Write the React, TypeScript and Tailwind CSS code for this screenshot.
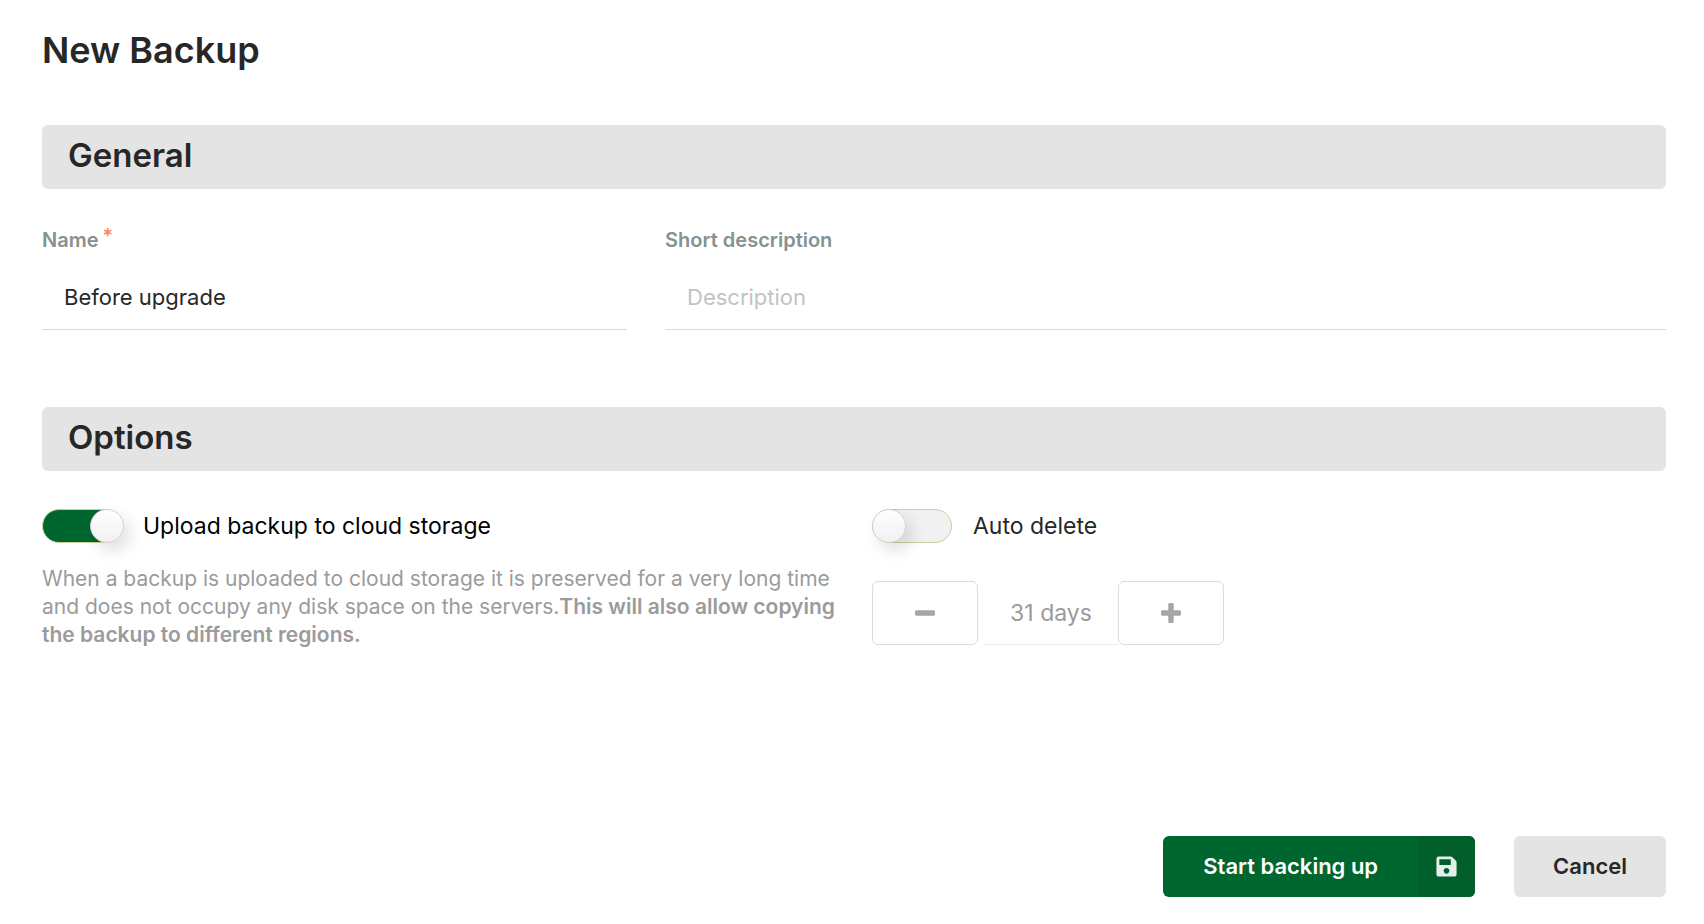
import { useState } from "react";
import type { InputHTMLAttributes, ReactNode } from "react";
import { FaSave } from "react-icons/fa";

function SectionHeading({ children }: { children: ReactNode }) {
  return (
    <h2 className="flex h-16 items-center rounded-md bg-[#e4e4e4] px-[26px] pb-0.5 text-[33px] font-semibold">
      {children}
    </h2>
  );
}

function Field({
  id,
  label,
  required,
  ...input
}: { id: string; label: string } & InputHTMLAttributes<HTMLInputElement>) {
  return (
    <div className="flex min-w-0 flex-col">
      <label htmlFor={id} className="flex gap-1 text-[20px] leading-6 font-semibold text-[#849290]">
        {label}
        {required && <span className="-mt-1 font-medium text-[#ff7f50]">*</span>}
      </label>
      <input
        id={id}
        className="mt-4 h-[62px] w-full border-b border-[#d9dbdb] bg-transparent px-[22px] pb-1 text-[22px] outline-none placeholder:text-[#bfc4c3]"
        {...input}
      />
    </div>
  );
}

function Toggle({
  id,
  label,
  checked,
  onChange,
}: {
  id: string;
  label: string;
  checked: boolean;
  onChange: (value: boolean) => void;
}) {
  return (
    <div className="flex h-[34px] items-center gap-[21px]">
      <input
        id={id}
        type="checkbox"
        role="switch"
        checked={checked}
        onChange={(e) => onChange(e.target.checked)}
        className="flex h-[34px] w-20 shrink-0 appearance-none items-center rounded-full border border-[#c9cf9c] bg-[#f1f1f1] before:-ml-px before:size-[34px] before:shrink-0 before:rounded-full before:border before:border-[#d2d2d2] before:bg-linear-to-b before:from-white before:to-[#f1f1f1] before:shadow-[6px_8px_16px_rgba(0,0,0,0.12)] checked:bg-[#006630] checked:before:ml-[47px]"
      />
      <label htmlFor={id} className={checked ? "text-[23px] text-black" : "text-[23px]"}>
        {label}
      </label>
    </div>
  );
}

function StepButton({ label, d, onClick }: { label: string; d: string; onClick: () => void }) {
  return (
    <button
      type="button"
      aria-label={label}
      onClick={onClick}
      className="flex h-16 w-[106px] items-center justify-center rounded-md border border-[#dcdcdc] text-[#a6a6a6]"
    >
      <svg viewBox="0 0 1408 1408" className="size-5" fill="currentColor" aria-hidden="true">
        <path d={d} />
      </svg>
    </button>
  );
}

const minusPath = "M96 512H1312Q1408 512 1408 608V800Q1408 896 1312 896H96Q0 896 0 800V608Q0 512 96 512Z";
const plusPath =
  "M608 0H800Q896 0 896 96V512H1312Q1408 512 1408 608V800Q1408 896 1312 896H896V1312Q896 1408 800 1408H608Q512 1408 512 1312V896H96Q0 896 0 800V608Q0 512 96 512H512V96Q512 0 608 0Z";

export default function App() {
  const [upload, setUpload] = useState(true);
  const [autoDelete, setAutoDelete] = useState(false);
  const [days, setDays] = useState(31);

  return (
    <form
      className="bg-white pt-7 pr-[38px] pb-6 pl-[42px] font-['Inter',sans-serif] text-[#272727]"
      onSubmit={(e) => e.preventDefault()}
    >
      <h1 className="text-[36px] leading-[45px] font-semibold">New Backup</h1>

      <section className="mt-[52px]">
        <SectionHeading>General</SectionHeading>
        <div className="mt-[39px] grid grid-cols-[585fr_1001fr] gap-[38px]">
          <Field id="name" label="Name" required defaultValue="Before upgrade" />
          <Field id="description" label="Short description" placeholder="Description" />
        </div>
      </section>

      <section className="mt-[77px]">
        <SectionHeading>Options</SectionHeading>
        <div className="mt-[38px] grid grid-cols-2 gap-9">
          <div>
            <Toggle id="upload" label="Upload backup to cloud storage" checked={upload} onChange={setUpload} />
            <p className="-mr-4 mt-[22px] text-[21px] leading-[28px] text-[#9b9b9b]">
              When a backup is uploaded to cloud storage it is preserved for a very long time
              <br />
              and does not occupy any disk space on the servers.
              <strong className="font-semibold">
                This will also allow copying
                <br />
                the backup to different regions.
              </strong>
            </p>
          </div>
          <div>
            <Toggle id="auto-delete" label="Auto delete" checked={autoDelete} onChange={setAutoDelete} />
            <div className="mt-[38px] flex">
              <StepButton label="Fewer days" d={minusPath} onClick={() => setDays(Math.max(1, days - 1))} />
              <input
                aria-label="Days until deletion"
                readOnly
                value={`${days} days`}
                className="ml-1.5 h-16 w-[134px] border-b border-[#ececec] text-center text-[23px] text-[#9b9b9b] outline-none"
              />
              <StepButton label="More days" d={plusPath} onClick={() => setDays(days + 1)} />
            </div>
          </div>
        </div>
      </section>

      <div className="mt-[187px] flex justify-end gap-[39px]">
        <button
          type="submit"
          className="flex h-[61px] overflow-hidden rounded-md bg-[#006630] text-[22px] font-semibold text-white"
        >
          <span className="flex h-full items-center px-10">Start backing up</span>
          <span className="flex h-full w-[57px] items-center justify-center bg-[#005f2b]">
            <FaSave className="size-[23px] opacity-90" aria-hidden="true" />
          </span>
        </button>
        <button type="button" className="h-[61px] rounded-md bg-[#e4e4e4] px-[39px] text-[22px] font-semibold">
          Cancel
        </button>
      </div>
    </form>
  );
}
